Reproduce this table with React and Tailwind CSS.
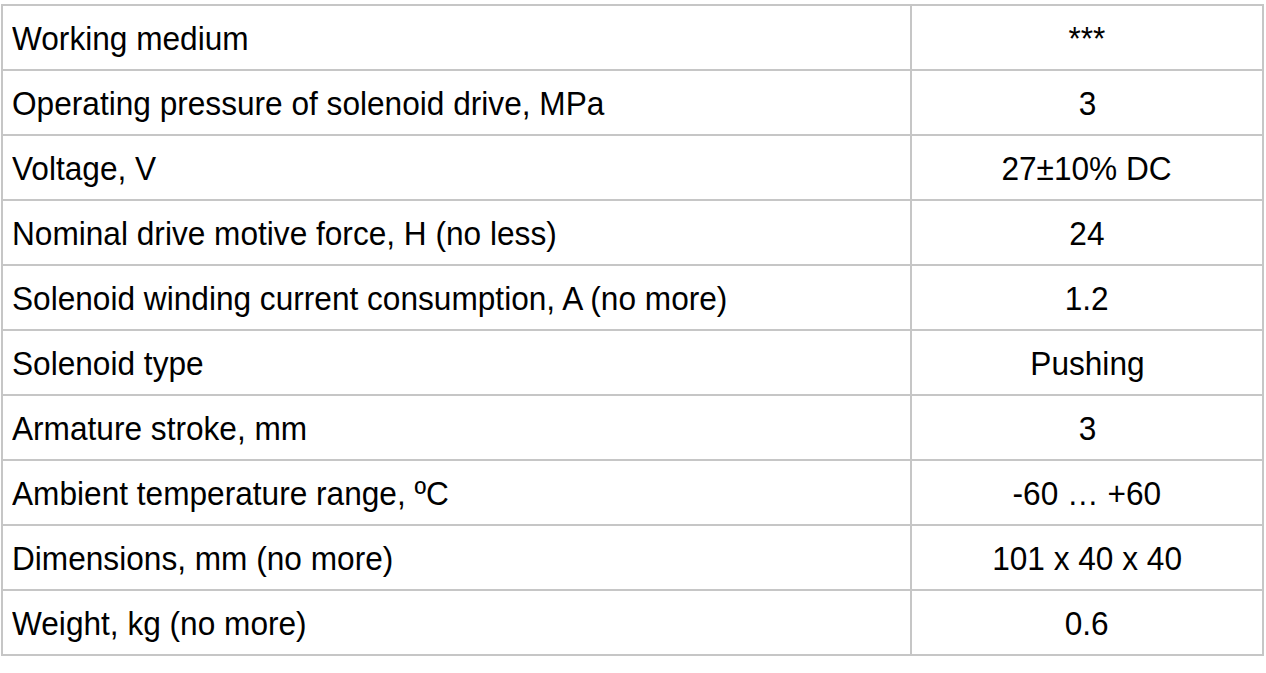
const rows = [
  ["Working medium", "***"],
  ["Operating pressure of solenoid drive, MPa", "3"],
  ["Voltage, V", "27±10% DC"],
  ["Nominal drive motive force, H (no less)", "24"],
  ["Solenoid winding current consumption, A (no more)", "1.2"],
  ["Solenoid type", "Pushing"],
  ["Armature stroke, mm", "3"],
  ["Ambient temperature range, ºC", "-60 … +60"],
  ["Dimensions, mm (no more)", "101 x 40 x 40"],
  ["Weight, kg (no more)", "0.6"],
];

export default function App() {
  return (
    <div className="w-[1266px] h-[673px] bg-white pt-[4px] pl-[1px]" style={{ fontFamily: '"Liberation Sans", Arial, sans-serif' }}>
      <table className="border-collapse w-[1263px] text-[34px] text-black">
        <tbody>
          {rows.map(([a, b], i) => (
            <tr key={i} className="h-[65px]">
              <td className="border-2 border-[#c6c6c6] pl-[9px] w-[909px] leading-none whitespace-nowrap">
                <span className="inline-block origin-left scale-x-[0.93] pt-[1px]">{a}</span>
              </td>
              <td className="border-2 border-[#c6c6c6] text-center leading-none whitespace-nowrap">
                <span className="inline-block origin-center scale-x-[0.93] pt-[1px]">{b}</span>
              </td>
            </tr>
          ))}
        </tbody>
      </table>
    </div>
  );
}
